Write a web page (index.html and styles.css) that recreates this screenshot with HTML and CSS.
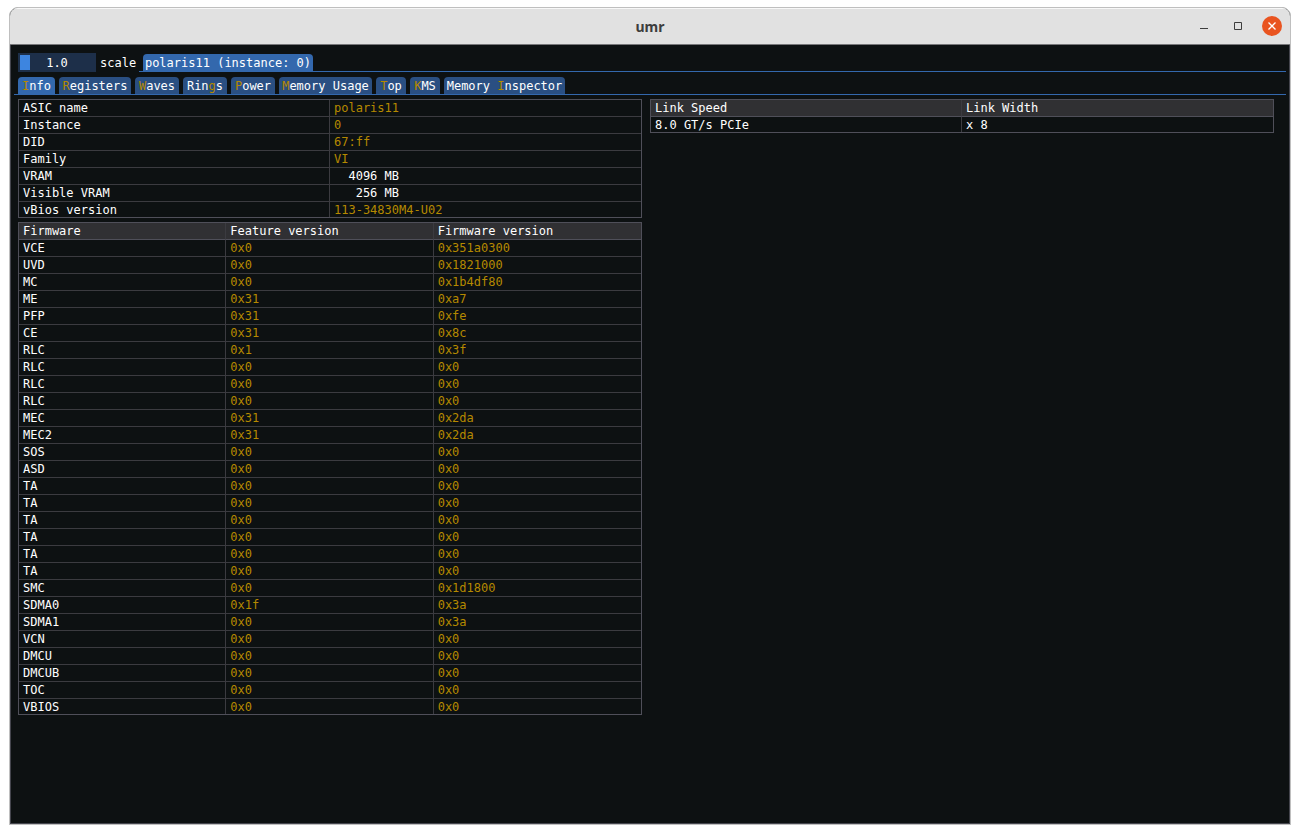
FILE: index.html
```html
<!DOCTYPE html>
<html lang="en">
<head>
<meta charset="utf-8">
<title>umr</title>
<link rel="stylesheet" href="styles.css">
</head>
<body>
<div class="window">
  <header class="titlebar">
    <h1 class="title">umr</h1>
    <div class="controls">
      <button class="control" type="button" aria-label="Minimize"><svg width="8" height="8" viewBox="0 0 8 8"><path d="M0 6.5H8" stroke="#3d3d3d" fill="none"/></svg></button>
      <button class="control" type="button" aria-label="Maximize"><svg width="8" height="8" viewBox="0 0 8 8"><path d="M.5 .5H7.5V7.5H.5Z" stroke="#3d3d3d" fill="none"/></svg></button>
      <button class="control close" type="button" aria-label="Close"><svg width="8" height="8" viewBox="0 0 8 8"><path d="M.5 .5L7.5 7.5M7.5 .5L.5 7.5" stroke="#fff" stroke-width="1.3" fill="none"/></svg></button>
    </div>
  </header>
  <main class="content">
    <div class="toolbar">
      <div class="scale">
        <div class="slider">
          <input class="range" id="scale" type="range" min="1" max="5" step="0.1" value="1">
          <output class="value" for="scale">1.0</output>
        </div>
        <label class="caption" for="scale">scale</label>
      </div>
      <div class="tabs devices" role="tablist">
        <button class="tab active" type="button" role="tab" aria-selected="true" style="--chars: 23">polaris11 (instance: 0)</button>
      </div>
    </div>
    <div class="tabs pages" role="tablist">
      <button class="tab active" type="button" role="tab" aria-selected="true" style="--chars: 4"><span class="key">I</span>nfo</button>
      <button class="tab" type="button" role="tab" style="--chars: 9"><span class="key">R</span>egisters</button>
      <button class="tab" type="button" role="tab" style="--chars: 5"><span class="key">W</span>aves</button>
      <button class="tab" type="button" role="tab" style="--chars: 5">Rin<span class="key">g</span>s</button>
      <button class="tab" type="button" role="tab" style="--chars: 5"><span class="key">P</span>ower</button>
      <button class="tab" type="button" role="tab" style="--chars: 12"><span class="key">M</span>emory Usage</button>
      <button class="tab" type="button" role="tab" style="--chars: 3"><span class="key">T</span>op</button>
      <button class="tab" type="button" role="tab" style="--chars: 3"><span class="key">K</span>MS</button>
      <button class="tab" type="button" role="tab" style="--chars: 16">Memory <span class="key">I</span>nspector</button>
    </div>
    <div class="panels">
      <section class="panel">
        <table class="grid">
          <tbody>
            <tr><td>ASIC name</td><td class="val">polaris11</td></tr>
            <tr><td>Instance</td><td class="val">0</td></tr>
            <tr><td>DID</td><td class="val">67:ff</td></tr>
            <tr><td>Family</td><td class="val">VI</td></tr>
            <tr><td>VRAM</td><td>  4096 MB</td></tr>
            <tr><td>Visible VRAM</td><td>   256 MB</td></tr>
            <tr><td>vBios version</td><td class="val">113-34830M4-U02</td></tr>
          </tbody>
        </table>
        <table class="grid">
          <thead>
            <tr><th>Firmware</th><th>Feature version</th><th>Firmware version</th></tr>
          </thead>
          <tbody>
            <tr><td>VCE</td><td class="val">0x0</td><td class="val">0x351a0300</td></tr>
            <tr><td>UVD</td><td class="val">0x0</td><td class="val">0x1821000</td></tr>
            <tr><td>MC</td><td class="val">0x0</td><td class="val">0x1b4df80</td></tr>
            <tr><td>ME</td><td class="val">0x31</td><td class="val">0xa7</td></tr>
            <tr><td>PFP</td><td class="val">0x31</td><td class="val">0xfe</td></tr>
            <tr><td>CE</td><td class="val">0x31</td><td class="val">0x8c</td></tr>
            <tr><td>RLC</td><td class="val">0x1</td><td class="val">0x3f</td></tr>
            <tr><td>RLC</td><td class="val">0x0</td><td class="val">0x0</td></tr>
            <tr><td>RLC</td><td class="val">0x0</td><td class="val">0x0</td></tr>
            <tr><td>RLC</td><td class="val">0x0</td><td class="val">0x0</td></tr>
            <tr><td>MEC</td><td class="val">0x31</td><td class="val">0x2da</td></tr>
            <tr><td>MEC2</td><td class="val">0x31</td><td class="val">0x2da</td></tr>
            <tr><td>SOS</td><td class="val">0x0</td><td class="val">0x0</td></tr>
            <tr><td>ASD</td><td class="val">0x0</td><td class="val">0x0</td></tr>
            <tr><td>TA</td><td class="val">0x0</td><td class="val">0x0</td></tr>
            <tr><td>TA</td><td class="val">0x0</td><td class="val">0x0</td></tr>
            <tr><td>TA</td><td class="val">0x0</td><td class="val">0x0</td></tr>
            <tr><td>TA</td><td class="val">0x0</td><td class="val">0x0</td></tr>
            <tr><td>TA</td><td class="val">0x0</td><td class="val">0x0</td></tr>
            <tr><td>TA</td><td class="val">0x0</td><td class="val">0x0</td></tr>
            <tr><td>SMC</td><td class="val">0x0</td><td class="val">0x1d1800</td></tr>
            <tr><td>SDMA0</td><td class="val">0x1f</td><td class="val">0x3a</td></tr>
            <tr><td>SDMA1</td><td class="val">0x0</td><td class="val">0x3a</td></tr>
            <tr><td>VCN</td><td class="val">0x0</td><td class="val">0x0</td></tr>
            <tr><td>DMCU</td><td class="val">0x0</td><td class="val">0x0</td></tr>
            <tr><td>DMCUB</td><td class="val">0x0</td><td class="val">0x0</td></tr>
            <tr><td>TOC</td><td class="val">0x0</td><td class="val">0x0</td></tr>
            <tr><td>VBIOS</td><td class="val">0x0</td><td class="val">0x0</td></tr>
          </tbody>
        </table>
      </section>
      <section class="panel">
        <table class="grid">
          <thead>
            <tr><th>Link Speed</th><th>Link Width</th></tr>
          </thead>
          <tbody>
            <tr><td>8.0 GT/s PCIe</td><td>x 8</td></tr>
          </tbody>
        </table>
      </section>
    </div>
  </main>
</div>
</body>
</html>
```

FILE: styles.css
```css
* { box-sizing: border-box; }

body {
  margin: 0;
  min-height: 100vh;
  display: flex;
  padding: 7px 9px 9px;
  background: #fff;
  color: #fff;
  font: 12px/16px "DejaVu Sans Mono", "Liberation Mono", monospace;
}

button { font: inherit; color: inherit; border: 0; padding: 0; }

.window {
  flex: 1;
  display: flex;
  flex-direction: column;
  border: 1px solid #bfbfbf;
  border-radius: 9px 9px 0 0;
  background: #0d1112;
  overflow: hidden;
}

.titlebar {
  display: grid;
  grid-template-columns: 1fr auto 1fr;
  align-items: center;
  height: 37px;
  background: #e1e1e1;
  border-top: 1px solid #f8f8f8;
  border-bottom: 1px solid #77777a;
  color: #3d3d3d;
}

.title {
  grid-column: 2;
  margin: 0;
  font: bold 14px/20px "Noto Sans", "Open Sans", sans-serif;
}

.controls {
  display: flex;
  justify-content: flex-end;
  gap: 14px;
  padding-right: 8px;
  padding-bottom: 1px;
}

.control {
  display: flex;
  align-items: center;
  justify-content: center;
  width: 20px;
  height: 20px;
  border-radius: 50%;
  background: transparent;
}

.close { background: #e95420; }

.content {
  flex: 1;
  padding: 8px 3px 0;
  border: 1px solid #44454d;
  border-top: 0;
}

.toolbar {
  display: flex;
  padding-left: 4px;
}

.scale { display: flex; align-items: center; gap: 4px; }

.caption { width: 39px; }

.slider { position: relative; width: 78px; height: 19px; }

.range {
  appearance: none;
  display: block;
  width: 100%;
  height: 100%;
  margin: 0;
  padding: 2px;
  background: #1d2f49;
}

.range::-webkit-slider-thumb {
  appearance: none;
  width: 10px;
  height: 15px;
  background: #3d85e0;
}

.value {
  position: absolute;
  inset: 0;
  line-height: 20px;
  text-align: center;
  pointer-events: none;
}

.tabs {
  display: flex;
  gap: 4px;
  padding: 0 4px;
  border-bottom: 1px solid #3368ad;
}

.devices { flex: 1; padding-top: 1px; }

.pages { margin-top: 5px; }

.tab {
  width: calc(var(--chars) * 7px + 9px);
  height: 17px;
  padding-top: 1px;
  line-height: 16px;
  white-space: pre;
  border-radius: 4px 4px 0 0;
  background: #2a4f82;
}

.tab.active { background: #3368ad; }

.key, .val { color: #b58900; }

.panels {
  display: grid;
  grid-template-columns: 1fr 1fr;
  gap: 8px;
  padding: 4px 12px 0 4px;
}

.panel { display: flex; flex-direction: column; gap: 4px; }

.grid {
  width: 100%;
  table-layout: fixed;
  border-spacing: 0;
  border: 1px solid #4f4f59;
}

.grid th, .grid td {
  height: 17px;
  padding: 1px 4px 0;
  line-height: 14px;
  vertical-align: top;
  border-bottom: 1px solid #3b3b40;
  border-right: 1px solid #3b3b40;
  font-weight: normal;
  text-align: left;
  white-space: pre;
}

.grid th { background: #303033; border-bottom-color: #4f4f59; }

.grid tr > :last-child { border-right: 0; }

.grid tbody tr:last-child td { height: 15px; border-bottom: 0; }
```
